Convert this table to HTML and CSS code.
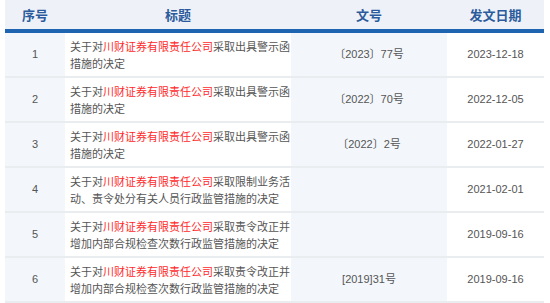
FILE: index.html
```html
<!DOCTYPE html>
<html lang="zh-CN">
<head>
    <meta charset="UTF-8">
    <title>监管措施</title>
    <link rel="stylesheet" href="styles.css">
</head>
<body>
    <table class="list">
        <thead>
            <tr>
                <th class="col-no">序号</th>
                <th class="col-title">标题</th>
                <th class="col-doc">文号</th>
                <th class="col-date">发文日期</th>
            </tr>
        </thead>
        <tbody>
            <tr>
                <td class="col-no">1</td>
                <td class="col-title">关于对<span class="hl">川财证券有限责任公司</span>采取出具警示函<br>措施的决定</td>
                <td class="col-doc">〔2023〕77号</td>
                <td class="col-date">2023-12-18</td>
            </tr>
            <tr>
                <td class="col-no">2</td>
                <td class="col-title">关于对<span class="hl">川财证券有限责任公司</span>采取出具警示函<br>措施的决定</td>
                <td class="col-doc">〔2022〕70号</td>
                <td class="col-date">2022-12-05</td>
            </tr>
            <tr>
                <td class="col-no">3</td>
                <td class="col-title">关于对<span class="hl">川财证券有限责任公司</span>采取出具警示函<br>措施的决定</td>
                <td class="col-doc">〔2022〕2号</td>
                <td class="col-date">2022-01-27</td>
            </tr>
            <tr>
                <td class="col-no">4</td>
                <td class="col-title">关于对<span class="hl">川财证券有限责任公司</span>采取限制业务活<br>动、责令处分有关人员行政监管措施的决定</td>
                <td class="col-doc"></td>
                <td class="col-date">2021-02-01</td>
            </tr>
            <tr>
                <td class="col-no">5</td>
                <td class="col-title">关于对<span class="hl">川财证券有限责任公司</span>采取责令改正并<br>增加内部合规检查次数行政监管措施的决定</td>
                <td class="col-doc"></td>
                <td class="col-date">2019-09-16</td>
            </tr>
            <tr>
                <td class="col-no">6</td>
                <td class="col-title">关于对<span class="hl">川财证券有限责任公司</span>采取责令改正并<br>增加内部合规检查次数行政监管措施的决定</td>
                <td class="col-doc">[2019]31号</td>
                <td class="col-date">2019-09-16</td>
            </tr>
        </tbody>
    </table>
</body>
</html>
```

FILE: styles.css
```css
body {
    margin: 0;
    padding: 0 6px 0 5px;
    background-color: #fff;
    font-family: "Liberation Sans", "Noto Sans CJK SC", sans-serif;
}
.list {
    width: 539px;
    border-collapse: collapse;
    table-layout: fixed;
}
.list th {
    height: 29px;
    padding: 0;
    background-color: #eef2f8;
    border-bottom: 4px solid #1f64b1;
    color: #2b5b9c;
    font-family: "Noto Sans CJK SC", sans-serif;
    font-size: 13px;
    font-weight: bold;
    text-align: center;
}
.list td {
    height: 43px;
    padding: 0;
    border-bottom: 2px solid #eaedf0;
    color: #555;
    font-size: 11px;
    line-height: 17px;
    text-align: center;
    vertical-align: middle;
}
.col-no {
    width: 60px;
}
.col-title {
    width: 226px;
}
.col-doc {
    width: 156px;
}
.col-date {
    width: 97px;
}
.list td.col-no,
.list td.col-doc {
    background-color: #f3f7fb;
}
.list td.col-title {
    padding-left: 5px;
    text-align: left;
    white-space: nowrap;
    font-family: "Noto Sans CJK SC", sans-serif;
}
.hl {
    color: #ff2a2a;
}
```
